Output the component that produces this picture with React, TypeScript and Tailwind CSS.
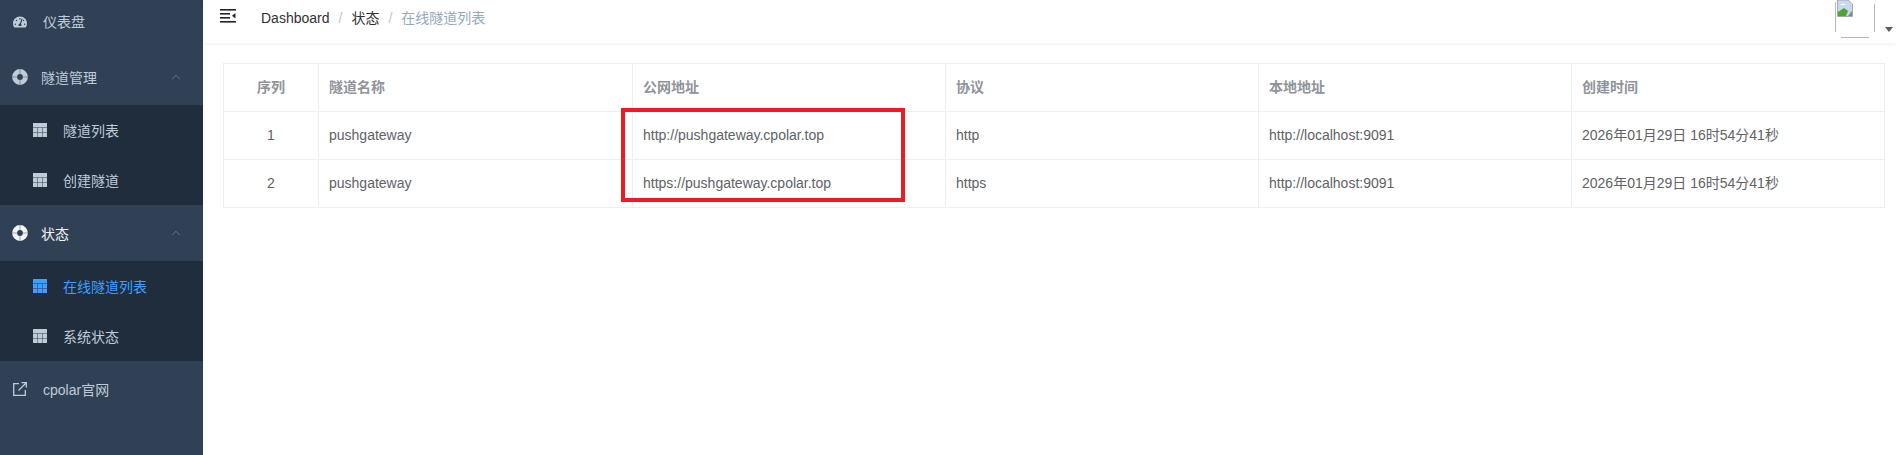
import React from "react";
import { FaTachometerAlt } from "react-icons/fa";
import { ChevronUp } from "lucide-react";

const font = "font-['Liberation_Sans','Noto_Sans_CJK_SC',sans-serif]";

function TableIcon() {
  return (
    <svg width="14" height="14" viewBox="0 0 14 14" className="shrink-0" fill="currentColor">
      <rect x="0" y="0" width="14" height="14" />
      <path d="M0 4.5 H14 M0 9.5 H14 M4.5 4.5 V14 M9.5 4.5 V14" stroke="#1f2d3d" strokeOpacity="0.45" strokeWidth="1" fill="none" />
    </svg>
  );
}

function RingIcon() {
  return (
    <svg width="16" height="16" viewBox="0 0 16 16" className="shrink-0">
      <circle cx="8" cy="8" r="5.4" fill="none" stroke="currentColor" strokeWidth="5" />
      <path d="M8 0 V5 M8 11 V16 M0 8 H5 M11 8 H16" stroke="#304156" strokeOpacity="0.45" strokeWidth="1" fill="none" />
    </svg>
  );
}

function LinkIcon() {
  return (
    <svg width="14" height="14" viewBox="0 0 14 14" className="shrink-0" fill="none" stroke="currentColor" strokeWidth="1.3">
      <path d="M6 1.7 H0.7 V13.3 H12.3 V8" />
      <path d="M5.5 8.5 L13 1 M8.5 0.7 H13.3 V5.5" />
    </svg>
  );
}

function SubItem({ label, active }: { label: string; active?: boolean }) {
  return (
    <div className={`h-[50px] flex items-center pl-[33px] text-sm ${active ? "text-[#409eff]" : "text-[#bfcbd9]"}`}>
      <TableIcon />
      <span className="ml-[16px] pt-[2px]">{label}</span>
    </div>
  );
}

function GroupTitle({ label, bright }: { label: string; bright?: boolean }) {
  return (
    <div className={`h-[56px] flex items-center pl-[12px] pr-[20px] text-sm ${bright ? "text-[#f4f4f5]" : "text-[#bfcbd9]"}`}>
      <RingIcon />
      <span className="ml-[13px] flex-1 pt-[1px]">{label}</span>
      <ChevronUp className="w-[14px] h-[14px] text-[#6b7b8f]" strokeWidth={1.5} />
    </div>
  );
}

function Sidebar() {
  return (
    <aside className="w-[203px] shrink-0 h-full bg-[#304156] overflow-hidden">
      <div className="-mt-[6px]">
        <div className="h-[55px] flex items-center pl-[13px] text-sm text-[#bfcbd9]">
          <FaTachometerAlt className="w-[14px] h-[14px] shrink-0" />
          <span className="ml-[16px]">仪表盘</span>
        </div>
        <GroupTitle label="隧道管理" />
        <div className="bg-[#1f2d3d]">
          <SubItem label="隧道列表" />
          <SubItem label="创建隧道" />
        </div>
        <GroupTitle label="状态" bright />
        <div className="bg-[#1f2d3d]">
          <SubItem label="在线隧道列表" active />
          <SubItem label="系统状态" />
        </div>
        <div className="h-[56px] flex items-center pl-[13px] text-sm text-[#bfcbd9]">
          <LinkIcon />
          <span className="ml-[16px] pt-[2px]">cpolar官网</span>
        </div>
      </div>
    </aside>
  );
}

function BrokenImage() {
  return (
    <svg width="42" height="40" viewBox="0 0 42 40" className="shrink-0">
      <path d="M1.5 2 V32 M40.5 4 V32 M7 37.5 H35" stroke="#b8b8b8" strokeWidth="1" fill="none" />
      <path d="M3.5 0 H14 L18.5 4 V16.5 H3.5 Z" fill="#c9d7f0" stroke="#a8a8a8" strokeWidth="1" />
      <path d="M4 16 V12 L10 8 L14 11 L12 16 Z" fill="#4ea52f" />
      <path d="M14 16 L18 11 V16 Z" fill="#7d8a78" />
      <path d="M6 5 Q9 2 12 5 Z" fill="#ffffff" />
    </svg>
  );
}

function Header() {
  return (
    <header className="h-[43px] shrink-0 bg-white shadow-[0_1px_4px_rgba(0,21,41,0.08)] flex items-start relative">
      <svg width="16" height="14" viewBox="0 0 16 14" className="ml-[17px] mt-[9px] shrink-0" fill="#1f2430">
        <rect x="0" y="0" width="16" height="1.6" />
        <rect x="0" y="4" width="10" height="1.6" />
        <rect x="0" y="8" width="10" height="1.6" />
        <rect x="0" y="12" width="16" height="1.6" />
        <path d="M15.5 4 L12 6.8 L15.5 9.6 Z" />
      </svg>
      <nav className="ml-[25px] mt-[9px] text-sm leading-[19px] flex">
        <span className="text-[#303133]">Dashboard</span>
        <span className="text-[#c0c4cc] mx-[9px]">/</span>
        <span className="text-[#303133]">状态</span>
        <span className="text-[#c0c4cc] mx-[9px]">/</span>
        <span className="text-[#97a8be]">在线隧道列表</span>
      </nav>
      <div className="ml-auto mr-[20px]">
        <BrokenImage />
      </div>
      <svg width="8" height="5" viewBox="0 0 8 5" className="absolute right-[3px] top-[27px]" fill="#5a5e66">
        <path d="M0 0 H8 L4 5 Z" />
      </svg>
    </header>
  );
}

const rows = [
  ["1", "pushgateway", "http://pushgateway.cpolar.top", "http", "http://localhost:9091", "2026年01月29日 16时54分41秒"],
  ["2", "pushgateway", "https://pushgateway.cpolar.top", "https", "http://localhost:9091", "2026年01月29日 16时54分41秒"],
];
const heads = ["序列", "隧道名称", "公网地址", "协议", "本地地址", "创建时间"];
const widths = ["w-[95px]", "w-[314px]", "w-[313px]", "w-[313px]", "w-[313px]", ""];

function DataTable() {
  return (
    <div className="relative mt-[20px] mr-[11px] ml-[20px]">
      <table className="w-full table-fixed border-collapse text-sm text-[#606266]">
        <colgroup>
          {widths.map((w, i) => (
            <col key={i} className={w} />
          ))}
        </colgroup>
        <thead>
          <tr className="h-[48px]">
            {heads.map((h, i) => (
              <th key={h} className={`border border-[#ebeef5] px-[10px] pb-[1px] font-bold text-[#909399] ${i === 0 ? "text-center" : "text-left"}`}>
                {h}
              </th>
            ))}
          </tr>
        </thead>
        <tbody>
          {rows.map((r) => (
            <tr key={r[0]} className="h-[48px]">
              {r.map((c, i) => (
                <td key={i} className={`border border-[#ebeef5] px-[10px] pb-[1px] font-normal ${i === 0 ? "text-center" : "text-left"}`}>
                  {c}
                </td>
              ))}
            </tr>
          ))}
        </tbody>
      </table>
      <div className="absolute left-[398px] top-[45px] w-[284px] h-[94px] border-[4px] border-[#ed1c24] pointer-events-none" />
    </div>
  );
}

export default function App() {
  return (
    <div className={`w-[1896px] h-[455px] flex overflow-hidden bg-white ${font}`}>
      <Sidebar />
      <main className="flex-1 min-w-0 flex flex-col">
        <Header />
        <DataTable />
      </main>
    </div>
  );
}
